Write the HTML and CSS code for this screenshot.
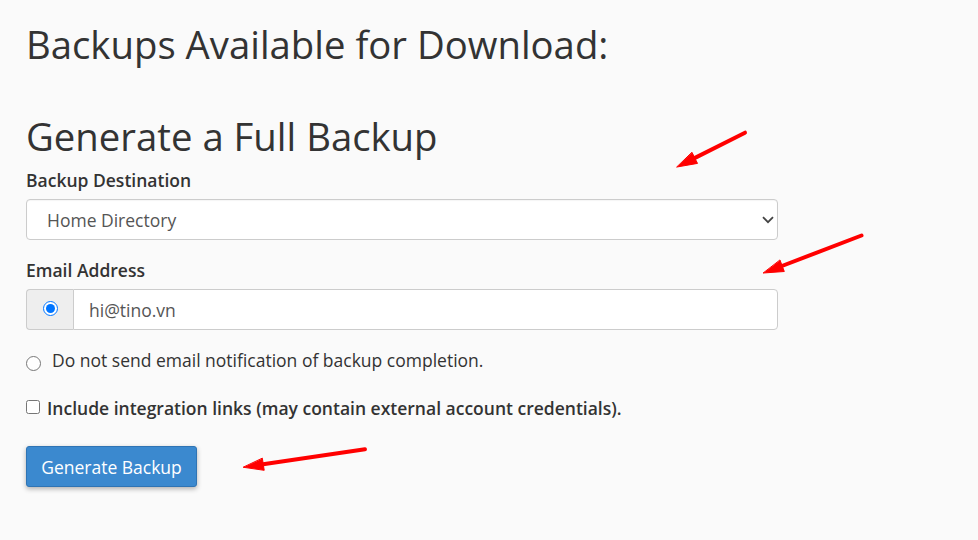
FILE: index.html
```html
<!DOCTYPE html>
<html lang="en">
<head>
<meta charset="utf-8">
<title>Backup</title>
<link rel="stylesheet" href="styles.css">
</head>
<body>
<div class="page">
  <h1 class="page-title">Backups Available for Download:</h1>
  <h2 class="section-title">Generate a Full Backup</h2>

  <label class="field-label" for="dest">Backup Destination</label>
  <div class="select-wrap">
    <select id="dest" class="select">
      <option>Home Directory</option>
    </select>
    <svg class="chevron" width="12" height="8" viewBox="0 0 12 8"><path d="M1 1.2 L6 6.2 L11 1.2" fill="none" stroke="#444" stroke-width="1.8"/></svg>
  </div>

  <label class="field-label second" for="email">Email Address</label>
  <div class="input-group">
    <span class="addon"><input type="radio" name="notify" class="radio" checked></span>
    <input id="email" class="text-input" type="text" value="hi@tino.vn">
  </div>

  <label class="option-row">
    <input type="radio" name="notify" class="radio row-radio">
    <span>Do not send email notification of backup completion.</span>
  </label>

  <label class="option-row check-row">
    <input type="checkbox" class="check">
    <span>Include integration links (may contain external account credentials).</span>
  </label>

  <button class="btn-primary" type="button">Generate Backup</button>
</div>

<svg class="annotations" width="978" height="540" viewBox="0 0 978 540">
  <g fill="#ff0000" stroke="#ff0000" stroke-linecap="round">
    <line x1="745" y1="132.7" x2="692" y2="159.4" stroke-width="4"/>
    <polygon points="677,167 697.5,163.4 692.1,152.6" stroke-width="1" stroke-linejoin="round"/>
    <line x1="861.5" y1="235.5" x2="778" y2="267.5" stroke-width="4"/>
    <polygon points="763.5,273 784.3,271.5 780.1,260.3" stroke-width="1" stroke-linejoin="round"/>
    <line x1="365" y1="449.3" x2="258" y2="465" stroke-width="4"/>
    <polygon points="243.5,467.3 264.2,470.3 262.4,458.5" stroke-width="1" stroke-linejoin="round"/>
  </g>
</svg>
</body>
</html>
```

FILE: styles.css
```css
html, body {
  margin: 0;
  padding: 0;
  background: #fafafa;
}

body {
  font-family: "Open Sans", "DejaVu Sans", sans-serif;
  color: #333333;
  position: relative;
  width: 978px;
  height: 540px;
  overflow: hidden;
}

.page {
  padding: 22px 26px 0 26px;
  display: flex;
  flex-direction: column;
  align-items: flex-start;
}

.page-title,
.section-title {
  margin: 0;
  font-size: 38.3px;
  font-weight: 400;
  line-height: 45px;
  color: #333333;
}

.section-title {
  margin-top: 47px;
}

.field-label {
  display: block;
  margin-top: 9px;
  margin-bottom: 7px;
  font-size: 17.5px;
  font-weight: 600;
  line-height: 24px;
  color: #333333;
}

.field-label.second {
  margin-top: 18px;
}

.select-wrap {
  position: relative;
  width: 752px;
}

.select {
  appearance: none;
  -webkit-appearance: none;
  display: block;
  box-sizing: border-box;
  width: 752px;
  height: 41px;
  margin: 0;
  padding: 0 40px 0 20px;
  border: 1px solid #cccccc;
  border-radius: 4px;
  background: #ffffff;
  font-family: "Open Sans", "DejaVu Sans", sans-serif;
  font-size: 17.5px;
  color: #555555;
  box-shadow: inset 0 1px 1px rgba(0, 0, 0, 0.04);
}

.chevron {
  position: absolute;
  left: 736px;
  top: 17px;
}

.input-group {
  display: flex;
  width: 752px;
  height: 41px;
  box-sizing: border-box;
}

.addon {
  display: flex;
  align-items: center;
  justify-content: center;
  box-sizing: border-box;
  width: 47px;
  height: 41px;
  background: #eeeeee;
  border: 1px solid #cccccc;
  border-right: none;
  border-radius: 4px 0 0 4px;
}

.radio {
  width: 15px;
  height: 15px;
  margin: 0;
}

.addon .radio {
  margin-top: -2px;
}

.text-input {
  flex: 1;
  box-sizing: border-box;
  height: 41px;
  margin: 0;
  padding: 0 15px;
  border: 1px solid #cccccc;
  border-radius: 0 4px 4px 0;
  background: #ffffff;
  font-family: "Open Sans", "DejaVu Sans", sans-serif;
  font-size: 17.5px;
  color: #555555;
  outline: none;
}

.option-row {
  display: flex;
  align-items: flex-start;
  margin-top: 18px;
  font-size: 17.5px;
  line-height: 24px;
  color: #333333;
}

.row-radio {
  margin-top: 8px;
  margin-right: 11px;
}

.check-row {
  margin-top: 24px;
  font-weight: 600;
}

.check {
  width: 14px;
  height: 14px;
  margin: 4px 7px 0 0;
}

.btn-primary {
  margin-top: 26px;
  box-sizing: border-box;
  width: 171px;
  height: 41px;
  padding: 0;
  border: 1px solid #2f74b4;
  border-radius: 3px;
  background: #3b89cf;
  color: #ffffff;
  font-family: "Open Sans", "DejaVu Sans", sans-serif;
  font-size: 17.5px;
  font-weight: 400;
  box-shadow: 0 2px 5px rgba(0, 0, 0, 0.3);
}

.annotations {
  position: absolute;
  left: 0;
  top: 0;
  pointer-events: none;
}
```
